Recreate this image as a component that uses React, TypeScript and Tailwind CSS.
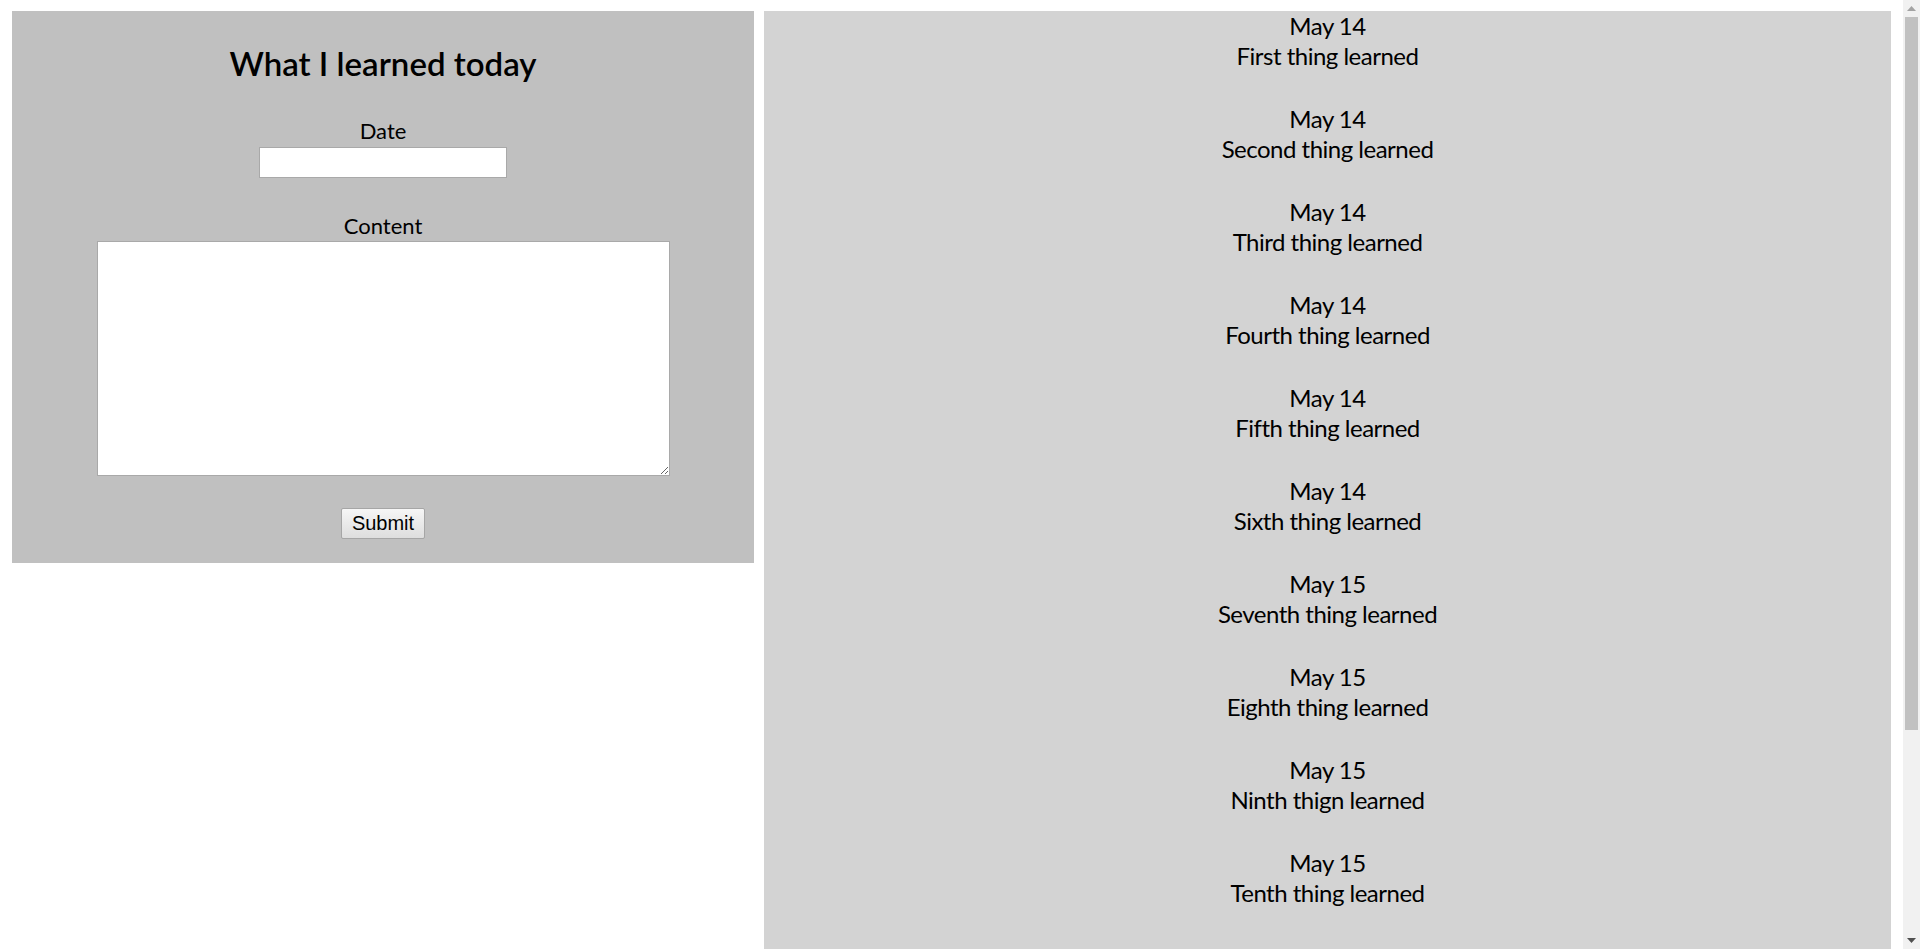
import React, { useState } from "react";

type Entry = {
  date: string;
  content: string;
};

const ENTRIES: Entry[] = [
  { date: "May 14", content: "First thing learned" },
  { date: "May 14", content: "Second thing learned" },
  { date: "May 14", content: "Third thing learned" },
  { date: "May 14", content: "Fourth thing learned" },
  { date: "May 14", content: "Fifth thing learned" },
  { date: "May 14", content: "Sixth thing learned" },
  { date: "May 15", content: "Seventh thing learned" },
  { date: "May 15", content: "Eighth thing learned" },
  { date: "May 15", content: "Ninth thign learned" },
  { date: "May 15", content: "Tenth thing learned" },
];

const LearnForm: React.FC = () => {
  const [date, setDate] = useState("");
  const [content, setContent] = useState("");

  const onSubmit = (e: React.FormEvent) => {
    e.preventDefault();
  };

  return (
    <form
      onSubmit={onSubmit}
      className="w-[742px] shrink-0 bg-[#c0c0c0] flex flex-col items-center pt-[30px] pb-[24px]"
    >
      <h1 className="text-[33px] leading-[44px] font-semibold text-black">
        What I learned today
      </h1>

      <label
        htmlFor="date"
        className="mt-[34px] text-[22px] leading-[24px] text-black"
      >
        Date
      </label>
      <input
        id="date"
        type="text"
        value={date}
        onChange={(e) => setDate(e.target.value)}
        className="mt-[4px] w-[248px] h-[31px] bg-white border border-[#a9a9a9] outline-none px-1"
      />

      <label
        htmlFor="content"
        className="mt-[36px] text-[22px] leading-[24px] text-black"
      >
        Content
      </label>
      <textarea
        id="content"
        value={content}
        onChange={(e) => setContent(e.target.value)}
        className="mt-[3px] w-[573px] h-[235px] bg-white border border-[#a9a9a9] outline-none p-1 resize"
      />

      <button
        type="submit"
        className="mt-[32px] w-[84px] h-[31px] rounded-[2px] border border-[#a6a6a6] bg-gradient-to-b from-[#f6f6f6] to-[#dedede] text-[20px] leading-[23px] text-black font-['Liberation_Sans',Arial,sans-serif]"
      >
        Submit
      </button>
    </form>
  );
};

const EntryList: React.FC = () => {
  return (
    <div className="flex-1 self-stretch bg-[#d3d3d3] flex flex-col items-center gap-[33px]">
      {ENTRIES.map((entry, i) => (
        <div
          key={i}
          className="flex flex-col items-center text-[24px] leading-[30px] tracking-[-0.5px] text-black"
        >
          <div>{entry.date}</div>
          <div>{entry.content}</div>
        </div>
      ))}
    </div>
  );
};

// page scrollbar as it appears in the screenshot (thumb at the top)
const Scrollbar: React.FC = () => (
  <div className="w-[17px] shrink-0 h-full bg-[#f1f1f1] flex flex-col items-center">
    <div className="h-[17px] w-full flex items-center justify-center">
      <svg width="9" height="5" viewBox="0 0 9 5">
        <path d="M0 5 L4.5 0 L9 5 Z" fill="#a3a3a3" />
      </svg>
    </div>
    <div className="w-[13px] h-[713px] bg-[#c1c1c1]" />
    <div className="flex-1" />
    <div className="h-[17px] w-full flex items-center justify-center">
      <svg width="9" height="5" viewBox="0 0 9 5">
        <path d="M0 0 L9 0 L4.5 5 Z" fill="#505050" />
      </svg>
    </div>
  </div>
);

export default function App() {
  return (
    <div className="h-screen overflow-hidden bg-white flex font-['Lato','Open_Sans',sans-serif]">
      <div className="flex-1 flex items-start gap-[10px] pt-[11px] px-[12px]">
        <LearnForm />
        <EntryList />
      </div>
      <Scrollbar />
    </div>
  );
}
